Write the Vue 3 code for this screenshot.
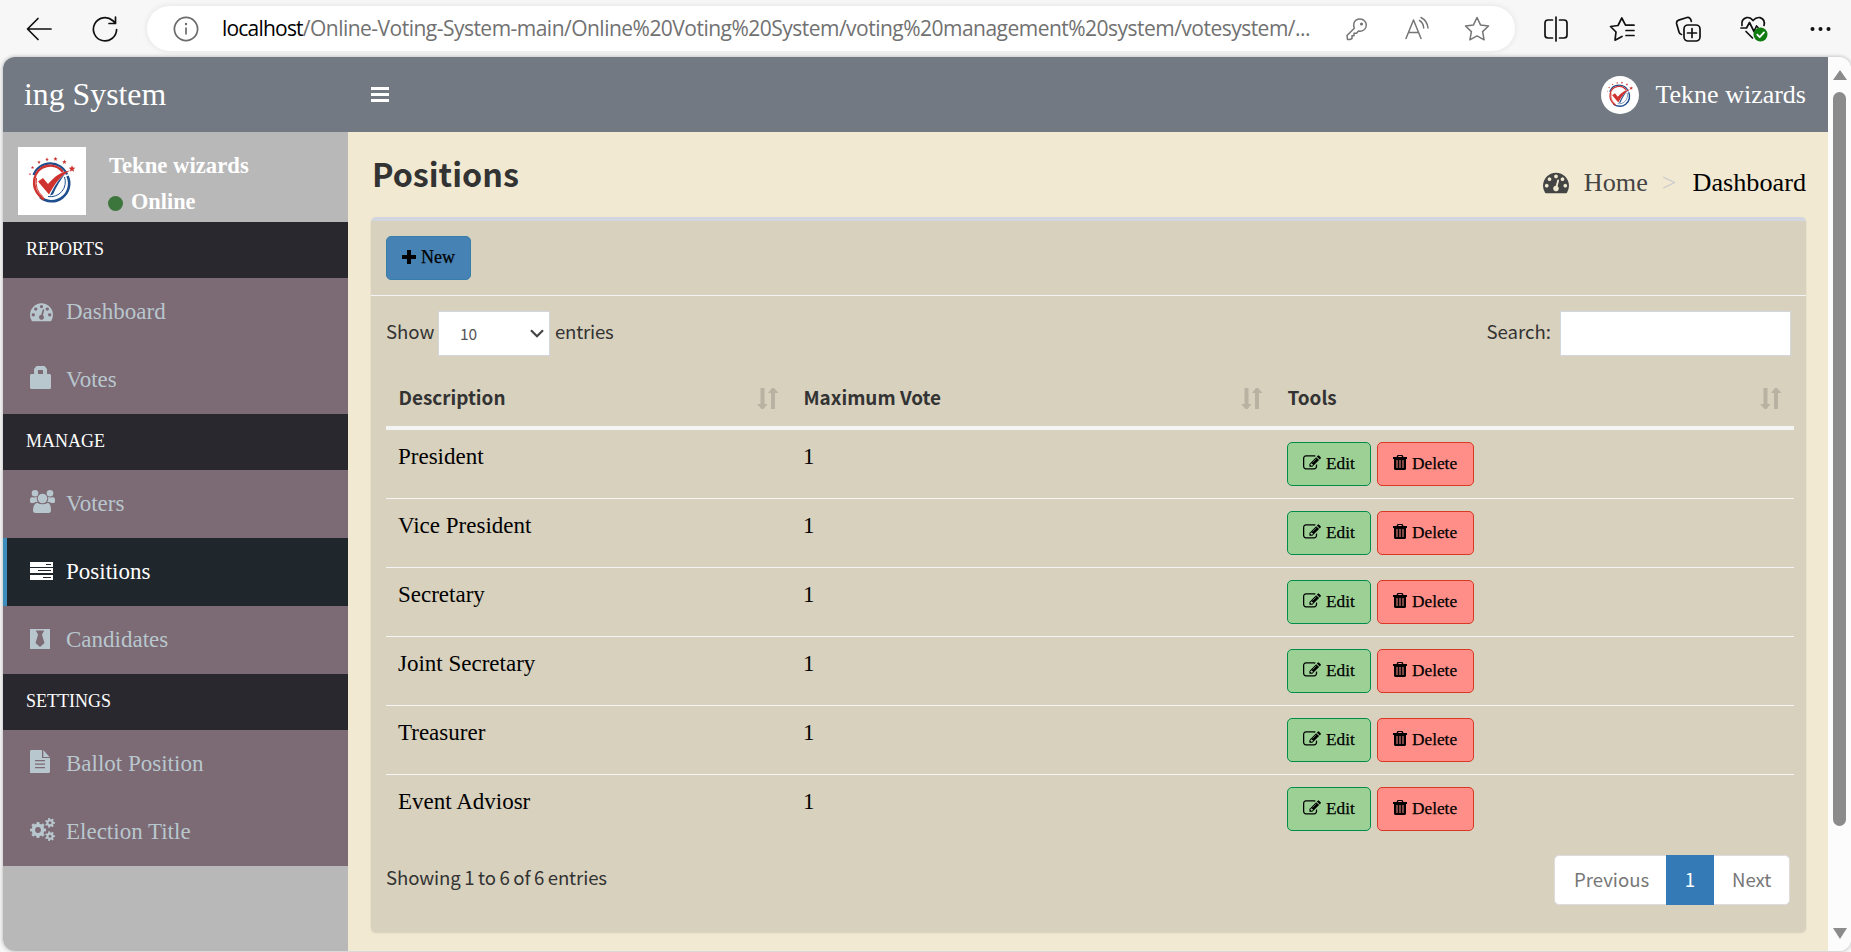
<script setup>
import { h } from 'vue'

const groups = [
  { title: 'REPORTS', items: [{ label: 'Dashboard', icon: 'gauge' }, { label: 'Votes', icon: 'lock' }] },
  {
    title: 'MANAGE',
    items: [
      { label: 'Voters', icon: 'users' },
      { label: 'Positions', icon: 'tasks', active: true },
      { label: 'Candidates', icon: 'tie' },
    ],
  },
  { title: 'SETTINGS', items: [{ label: 'Ballot Position', icon: 'file' }, { label: 'Election Title', icon: 'cogs' }] },
]
const columns = ['Description', 'Maximum Vote', 'Tools']
const rows = ['President', 'Vice President', 'Secretary', 'Joint Secretary', 'Treasurer', 'Event Adviosr']

const gaugePath =
  'M384 1152q0-53-37.5-90.5t-90.5-37.5-90.5 37.5-37.5 90.5 37.5 90.5 90.5 37.5 90.5-37.5 37.5-90.5zm192-448q0-53-37.5-90.5t-90.5-37.5-90.5 37.5-37.5 90.5 37.5 90.5 90.5 37.5 90.5-37.5 37.5-90.5zm428 481l101-382q6-26-7.5-48.5t-38.5-29.5-48 6.5-30 39.5l-101 382q-60 5-107 43.5t-63 98.5q-20 77 20 146t117 89 146-20 89-117q16-60-6-117t-72-91zm660-33q0-53-37.5-90.5t-90.5-37.5-90.5 37.5-37.5 90.5 37.5 90.5 90.5 37.5 90.5-37.5 37.5-90.5zm-640-640q0-53-37.5-90.5t-90.5-37.5-90.5 37.5-37.5 90.5 37.5 90.5 90.5 37.5 90.5-37.5 37.5-90.5zm448 192q0-53-37.5-90.5t-90.5-37.5-90.5 37.5-37.5 90.5 37.5 90.5 90.5 37.5 90.5-37.5 37.5-90.5zm320 448q0 261-141 483-19 29-54 29h-1402q-35 0-54-29-141-221-141-483 0-182 71-348t191-286 286-191 348-71 348 71 286 191 191 286 71 348z'

// Outline of a gear with square teeth and a round hole
function gear(cx, cy, rOut, rIn, hole, teeth) {
  const pts = []
  const step = (Math.PI * 2) / teeth
  for (let i = 0; i < teeth; i++) {
    const a = i * step
    for (const [r, o] of [[rIn, -0.32], [rOut, -0.2], [rOut, 0.2], [rIn, 0.32]]) {
      pts.push(`${(cx + r * Math.cos(a + o * step)).toFixed(2)} ${(cy + r * Math.sin(a + o * step)).toFixed(2)}`)
    }
  }
  return `M${pts.join('L')}Z M${cx - hole} ${cy}a${hole} ${hole} 0 1 0 ${hole * 2} 0a${hole} ${hole} 0 1 0 ${-hole * 2} 0Z`
}

function star(cx, cy, r) {
  const pts = []
  for (let i = 0; i < 10; i++) {
    const a = (Math.PI / 5) * i - Math.PI / 2
    const q = i % 2 ? r * 0.45 : r
    pts.push(`${(cx + q * Math.cos(a)).toFixed(2)},${(cy + q * Math.sin(a)).toFixed(2)}`)
  }
  return pts.join(' ')
}

const stars = [[12, 27.2, 1.2], [14.5, 20.5, 1.7], [21, 15.2, 1.8], [29, 12.5, 1.9], [37.5, 12, 2.2], [46.4, 15, 2.4], [54, 21.8, 3.6]]
const Logo = () =>
  h('svg', { viewBox: '0 0 68 68', fill: 'none' }, [
    h('rect', { width: 68, height: 68, fill: '#fff' }),
    h('path', { d: 'M15.500 28A18 18 0 0 1 49 27.500', stroke: '#1f4e8f', 'stroke-width': 2.2 }),
    h('path', { d: 'M49.500 29A17.700 17.700 0 0 1 22 50', stroke: '#1f4e8f', 'stroke-width': 2.6 }),
    h('path', { d: 'M46.500 30A14.800 14.800 0 0 1 30 49.500', stroke: '#1f4e8f', 'stroke-width': 1 }),
    h('path', { d: 'M45 25A16 16 0 0 0 16.500 31.500Q14 44 26 52.500', stroke: '#cf3330', 'stroke-width': 2.4 }),
    h('path', { d: 'M18.500 31Q16.500 43 25 49.500', stroke: '#cf3330', 'stroke-width': 1 }),
    h('path', { d: 'M20 34.500L25 31L30 37C37 29 43 25 52 23.500C43 29 37 36 31 47.500Z', fill: '#cf3330' }),
    h('path', { d: 'M32 48.500C36.500 38.500 41 32 47 27C42.500 33 38 40 35 47.500Z', fill: '#1f4e8f' }),
    ...stars.map(([x, y, r]) => h('polygon', { points: star(x, y, r), fill: '#cf3330' })),
  ])
</script>

<template>
  <div class="window">
    <div class="toolbar">
      <span class="slot"><svg width="26" height="26" viewBox="0 0 26 26" class="ln dark"><path d="M25 13H2M12 2.500L1.500 13L12 23.500" /></svg></span>
      <span class="slot"><svg width="26" height="26" viewBox="0 0 26 26" class="ln dark"><path d="M24.600 13.500a11.600 11.600 0 1 1-4-9L23.500 7M23.500 1v6.500h-6.500" /></svg></span>
      <div class="urlbar">
        <svg class="info" width="26" height="26" viewBox="0 0 26 26"><circle cx="13" cy="13" r="11.600" fill="none" stroke="#6b6b6b" stroke-width="1.700" /><path d="M13 11.500v7" stroke="#6b6b6b" stroke-width="1.700" /><circle cx="13" cy="8" r="1.200" fill="#6b6b6b" /></svg>
        <div class="url"><span class="host">localhost</span><span class="rest">/Online-Voting-System-main/Online%20Voting%20System/voting%20management%20system/votesystem/...</span></div>
        <div class="urlicons">
          <span><svg width="26" height="26" viewBox="0 0 26 26" class="ln grey"><path d="M10.300 12.200Q8.500 7 12 4.200 15.500 1.800 19.500 4q4 3 2.300 7.500-2.300 4.500-7.300 3.500L12.500 17.300H10v2.500H8v2.700L6 23.500H3.500L3 19.500Z" /><circle cx="17.500" cy="8" r=".8" /></svg></span>
          <span><svg width="26" height="26" viewBox="0 0 26 26" class="ln grey"><path d="M2 22.500L9.500 4L17 22.500M4.700 16.500H14.300M15.500 4.500q4 2.500 4.200 7.500M17 1.500q6.500 3.500 7 10.500" /></svg></span>
          <span><svg width="26" height="26" viewBox="0 0 26 26" class="ln grey"><path d="M13 1.500l3.500 7.400 8 1.100-5.900 5.600 1.500 8.200L13 19.900l-7.100 3.900 1.500-8.200L1.500 10l8-1.100Z" /></svg></span>
        </div>
      </div>
      <span class="slot first"><svg width="26" height="26" viewBox="0 0 26 26" class="ln dark"><path d="M9.500 4H5Q2 4 2 7v12q0 3 3 3h4.500M16.500 4H21q3 0 3 3v12q0 3-3 3h-4.500M13 1v24" /></svg></span>
      <span class="slot"><svg width="26" height="26" viewBox="0 0 26 26" class="ln dark"><path d="M13 20.500L6 24.200l1-8.200L1.500 10.500l7.500-1L12.800 2l3.700 7.200H25M17 14.500H25M17 19.500H25" /></svg></span>
      <span class="slot"><svg width="26" height="26" viewBox="0 0 26 26" class="ln dark"><rect x="9" y="9" width="16" height="16" rx="4" /><path d="M17 12.500v9M12.500 17h9M6.500 18.500Q4.500 18 4 16L1.700 8q-.7-3 2-3.900L12 1.500q3.300-.6 4.300 3.800" /></svg></span>
      <span class="slot"><svg width="28" height="28" viewBox="0 0 28 28" class="ln dark"><path d="M2 10.500Q1 4 6.500 2.600 10.500 2 13 5.500 16 2 20 2.600 25.500 4.500 24 10.500M1 13h5.500l3-5.500 4.500 9L16.500 11l1.500 1.500M6 16.500l6.500 6.500" /><circle cx="20.500" cy="19.500" r="7" fill="#107c10" stroke="none" /><path d="M17.300 19.700l2.400 2.400 4.300-4.700" stroke="#fff" stroke-width="1.800" /></svg></span>
      <span class="slot"><svg width="26" height="26" viewBox="0 0 26 26" fill="#111"><circle cx="5.500" cy="13" r="2" /><circle cx="13.500" cy="13" r="2" /><circle cx="21.500" cy="13" r="2" /></svg></span>
    </div>

    <div class="viewport">
      <div class="page">
        <header class="topbar">
          <div class="brand">ing System</div>
          <div class="burger"><i></i><i></i><i></i></div>
          <div class="account"><Logo class="round" /><span>Tekne wizards</span></div>
        </header>
        <div class="main">
          <aside class="sidebar">
            <div class="user">
              <Logo class="avatar" />
              <div class="who">
                <p>Tekne wizards</p>
                <p class="online"><i></i><span>Online</span></p>
              </div>
            </div>
            <nav v-for="g in groups" :key="g.title">
              <div class="group">{{ g.title }}</div>
              <div v-for="it in g.items" :key="it.label" class="item" :class="{ active: it.active }">
                <span class="ico">
                  <svg v-if="it.icon === 'gauge'" class="gauge" width="23" height="23" viewBox="0 0 1792 1792"><path :d="gaugePath" /></svg>
                  <svg v-else-if="it.icon === 'lock'" class="up" width="21" height="23" viewBox="0 0 21 23"><path fill-rule="evenodd" d="M1 8H4V3L6.500 0H14.500L17 3V8H20L21 9V22L20 23H1L0 22V9ZM8 4V8H13V4Z" /></svg>
                  <svg v-else-if="it.icon === 'users'" class="up" width="25" height="23" viewBox="0 0 25 23"><circle cx="5" cy="3.300" r="3.300" /><circle cx="20" cy="3.300" r="3.300" /><circle cx="12.500" cy="8.500" r="4.800" /><path d="M2 7q2.500 1.300 5-.2-.8 3 .8 5.200H5.500L4 13H1L0 12V9.500Q0 7.500 2 7ZM23 7q-2.500 1.300-5-.2.8 3-.8 5.200h2.300L21 13h3l1-1V9.500Q25 7.500 23 7ZM7 12.700q5.500 3 11 0 3 1.300 3 7.300 0 3-2.500 3H6Q3 23 3 20.500 3 14 7 12.700Z" /></svg>
                  <svg v-else-if="it.icon === 'tasks'" class="mid" width="23" height="18" viewBox="0 0 23 18"><path fill-rule="evenodd" d="M0 0H23V5H0ZM16 2V3H21V2ZM0 6H23V11H0ZM8 8V9H21V8ZM0 13H23V18H0ZM13 15V16H21V15Z" /></svg>
                  <svg v-else-if="it.icon === 'tie'" class="mid" width="20" height="20" viewBox="0 0 20 20"><path fill-rule="evenodd" d="M0 0H20V20H0ZM6 2L8 5.500L7.500 7.500L5.500 14L10 18L14.500 14L12.500 7.500L12 5.500L14 2V1.500H6Z" /></svg>
                  <svg v-else-if="it.icon === 'file'" class="up" width="20" height="23" viewBox="0 0 20 23"><path fill-rule="evenodd" d="M0 1L1 0H12V8H20V22L19 23H0ZM5 10V11.200H15V10ZM5 13.500V14.700H15V13.500ZM5 17V18.200H15V17Z" /><path d="M13.300 0L19.500 7H13.300Z" /></svg>
                  <svg v-else class="up" width="25" height="23" viewBox="0 0 25 23" fill-rule="evenodd"><path :d="gear(8, 12, 8.2, 6.4, 2.9, 8)" /><path :d="gear(20, 4.8, 5, 3.6, 1.5, 7)" /><path :d="gear(20, 18.2, 5, 3.6, 1.5, 7)" /></svg>
                </span>
                <span class="label">{{ it.label }}</span>
              </div>
            </nav>
          </aside>

          <section class="content">
            <div class="heading">
              <h1>Positions</h1>
              <div class="crumbs">
                <svg width="26" height="26" viewBox="0 0 1792 1792"><path :d="gaugePath" /></svg>
                <span class="home">Home</span><span class="sep">&gt;</span><span class="here">Dashboard</span>
              </div>
            </div>

            <div class="box">
              <div class="boxhead">
                <button class="btn new"><svg width="14" height="14" viewBox="0 0 14 14"><path d="M5 0H9V5H14V9H9V14H5V9H0V5H5Z" /></svg><span>New</span></button>
              </div>
              <div class="filters">
                <span class="show">Show</span>
                <div class="select"><span>10</span><svg width="14" height="9" viewBox="0 0 14 9"><path d="M1 1.200L7 7.200L13 1.200" fill="none" stroke="#444" stroke-width="2.200" /></svg></div>
                <span class="entries">entries</span>
                <span class="search">Search:</span>
                <input class="field" />
              </div>
              <div class="table">
                <div class="tr th">
                  <div v-for="c in columns" :key="c" class="cell">
                    <span>{{ c }}</span>
                    <svg width="22" height="21" viewBox="0 0 22 21"><path d="M3.500 0H7.500V16H10.500L6.500 21H4.500L0 16H3.500ZM14 21H18V5H21.500L17 0H15L11 5H14Z" /></svg>
                  </div>
                </div>
                <div v-for="r in rows" :key="r" class="tr row">
                  <div class="cell">{{ r }}</div>
                  <div class="cell">1</div>
                  <div class="cell tools">
                    <button class="btn edit"><svg width="18" height="18" viewBox="0 0 1792 1792"><path d="M888 1184l116-116-152-152-116 116v56h96v96h56zm440-720q-16-16-33 1l-350 350q-17 17-1 33t33-1l350-350q17-17 1-33zm80 594v190q0 119-84.500 203.500t-203.500 84.500h-832q-119 0-203.500-84.500t-84.500-203.500v-832q0-119 84.500-203.500t203.500-84.500h832q63 0 117 25 15 7 18 23 3 17-9 29l-49 49q-14 14-32 8-23-6-45-6h-832q-66 0-113 47t-47 113v832q0 66 47 113t113 47h832q66 0 113-47t47-113v-126q0-13 9-22l64-64q15-15 35-7t20 29zm-96-738l288 288-672 672h-288v-288zm444 132l-92 92-288-288 92-92q28-28 68-28t68 28l152 152q28 28 28 68t-28 68z" /></svg><span>Edit</span></button>
                    <button class="btn delete"><svg width="14" height="15" viewBox="0 0 14 15"><path fill-rule="evenodd" d="M0 2H3.500L4.500 0H9.500L10.500 2H14V4H13V14L12 15H2L1 14V4H0ZM5 2H9L8.500 1H5.500ZM3.500 5V13H4.500V5ZM6.500 5V13H7.500V5ZM9.500 5V13H10.500V5Z" /></svg><span>Delete</span></button>
                  </div>
                </div>
              </div>
              <div class="foot">
                <span class="summary">Showing 1 to 6 of 6 entries</span>
                <div class="pager"><span class="prev">Previous</span><span class="cur">1</span><span class="next">Next</span></div>
              </div>
            </div>
          </section>
        </div>
      </div>
      <div class="scrollbar"><i class="arrow top"></i><i class="thumb"></i><i class="arrow bottom"></i></div>
    </div>
  </div>
</template>

<style>
body { overflow: hidden; background: #f7f7f7; }
</style>

<style scoped>
* { box-sizing: border-box; }
p, h1 { margin: 0; }
svg { display: block; flex: none; }
.window { width: 1851px; height: 952px; background: #f7f7f7; font-family: "Liberation Serif", serif; white-space: nowrap; overflow: hidden; }
.ln { fill: none; stroke-width: 1.7; stroke-linejoin: round; stroke-linecap: round; }
.dark { stroke: #111; }
.grey { stroke: #757575; stroke-width: 1.5; }

.toolbar { height: 57px; padding-left: 6px; display: flex; align-items: center; }
.slot { width: 66px; flex: none; display: flex; justify-content: center; }
.slot.first { margin-left: 8px; }
.urlbar { width: 1368px; flex: none; height: 45px; margin-left: 9px; background: #fff; border-radius: 23px; box-shadow: 0 0 6px rgba(0, 0, 0, .09); display: flex; align-items: center; }
.info { margin-left: 26px; }
.url { width: 1105px; margin-left: 23px; padding-bottom: 1px; font: 21px/30px "Open Sans", sans-serif; color: #717171; display: flex; }
.host { color: #000; letter-spacing: -0.8px; }
.rest { letter-spacing: -0.52px; }
.urlicons { display: flex; }
.urlicons span { width: 60px; display: flex; justify-content: center; }

.viewport { height: 894px; margin-left: 3px; display: flex; border-radius: 12px; overflow: hidden; box-shadow: 0 0 4px rgba(0, 0, 0, .3); }
.page { width: 1825px; display: flex; flex-direction: column; }
.topbar { height: 75px; background: #727982; display: flex; align-items: center; color: #fff; }
.brand { width: 345px; padding: 0 0 0 21px; font-size: 31.800px; line-height: 36px; }
.burger { width: 18px; margin-left: 23px; display: flex; flex-direction: column; gap: 3px; }
.burger i { height: 3px; background: #fff; }
.account { margin-left: auto; padding-right: 22px; display: flex; align-items: center; gap: 16px; font-size: 26px; }
.account span { line-height: 30px; padding-top: 1px; }
.round { width: 38px; height: 38px; border-radius: 50%; }

.main { flex: 1; display: flex; background: #f1e9d2; }
.sidebar { width: 345px; background: #b8b8b8; }
.user { height: 90px; padding: 15px 0 0 15px; display: flex; gap: 23px; color: #fff; font-weight: bold; font-size: 22.700px; }
.avatar { width: 68px; height: 68px; }
.who { padding-top: 1px; }
.who p { height: 36px; line-height: 36px; }
.online { display: flex; align-items: center; margin-left: -1px; font-size: 22.300px; }
.online i { width: 15px; height: 15px; border-radius: 50%; background: #3c763d; margin: 2px 8px 0 0; }
.group { height: 56px; padding-left: 23px; line-height: 54px; background: #29282f; color: #fff; font-size: 18px; }
.item { height: 68px; padding-left: 27px; display: flex; align-items: center; background: #7c6a74; color: #b8c7ce; font-size: 23px; }
.item.active { background: #20272c; color: #fff; padding-left: 23px; border-left: 4px solid #3c8dbc; }
.ico { width: 36px; fill: currentColor; }
.ico .up { margin-bottom: 5px; }
.ico .mid { margin-bottom: 3px; }
.ico .gauge { margin-bottom: 2px; }
.label { line-height: 30px; padding-bottom: 1px; }

.content { flex: 1; padding: 0 22px 0 23px; }
.heading { height: 85px; display: flex; justify-content: space-between; }
h1 { font: bold 32.300px/48px "Noto Sans CJK JP", sans-serif; color: #333; padding: 17px 0 0 1px; }
.crumbs { display: flex; align-items: center; height: 30px; margin-top: 36px; font-size: 26.200px; }
.crumbs svg { fill: #444; margin-bottom: 2px; }
.home { color: #444; margin-left: 15px; }
.sep { color: #ccc; margin: 0 16px 0 14px; }
.here { color: #000; }

.box { height: 715px; background: #d8d1be; border-top: 4px solid #d2d6de; border-radius: 5px; box-shadow: 0 1px 2px rgba(0, 0, 0, .12); font-family: "Noto Sans CJK JP", sans-serif; font-size: 18.600px; color: #333; }
.boxhead { height: 75px; padding: 15px; border-bottom: 1px solid #f4f4f4; }
.btn { height: 44px; padding: 0; display: flex; align-items: center; font-family: "Liberation Serif", serif; font-size: 17.300px; color: #000; border: 1px solid; border-radius: 5px; -webkit-text-stroke: .25px #000; }
.btn svg { margin-bottom: 3px; }
.btn span { padding-bottom: 1px; }
.new { width: 85px; padding-left: 15px; gap: 5px; background: #4682b4; border-color: #367fa9; font-size: 18px; }
.filters { height: 60px; padding: 15px 15px 0 15px; display: flex; line-height: 40px; }
.show { width: 52px; }
.select { width: 112px; height: 45px; background: #fff; border: 1px solid #d2d6de; padding: 0 5px 0 21px; display: flex; align-items: center; justify-content: space-between; font-size: 15.500px; color: #555; }
.select span { padding-bottom: 2px; }
.entries { margin-left: 5px; letter-spacing: -.2px; }
.search { margin-left: auto; }
.field { width: 231px; height: 45px; margin-left: 9px; border: 1px solid #d2d6de; background: #fff; }
.table { width: 1408px; margin-left: 15px; }
.tr { display: grid; grid-template-columns: 405px 484px 519px; }
.th { height: 74px; border-bottom: 4px solid #f4f4f4; font-weight: bold; font-size: 18.900px; }
.th .cell { display: flex; justify-content: space-between; align-items: flex-start; padding: 21px 12px 0 12.500px; line-height: 40px; }
.th svg { margin-top: 11px; fill: #b9b2a2; }
.row { height: 69px; font-family: "Liberation Serif", serif; font-size: 23px; line-height: 30px; color: #000; border-top: 1px solid #f4f4f4; }
.th + .row { height: 68px; border-top: 0; }
.row .cell { padding: 12px 12px 0; }
.tools { display: flex; gap: 6px; }
.edit { width: 84px; padding-left: 15px; gap: 5px; background: #9cd095; border-color: #008d4c; }
.delete { width: 97px; padding-left: 15px; gap: 5px; background: #ff8e88; border-color: #d73925; }
.foot { display: flex; justify-content: space-between; padding: 12px 16px 0 15px; }
.summary { padding-top: 2px; line-height: 40px; letter-spacing: -.1px; word-spacing: -.5px; }
.pager { height: 50px; display: flex; line-height: 46px; color: #777; background: #fff; border: 1px solid #ddd; border-radius: 5px; }
.prev { width: 111px; padding-left: 19px; }
.cur { width: 48px; margin: -1px 0; line-height: 48px; background: #337ab7; color: #fff; text-align: center; }
.next { width: 75px; padding-left: 18px; }

.scrollbar { width: 23px; background: #fcfcfc; display: flex; flex-direction: column; align-items: center; }
.arrow { border: 7.500px solid transparent; }
.top { border-top: 0; border-bottom: 10px solid #8b8b8b; margin-top: 13px; }
.bottom { border-bottom: 0; border-top: 11px solid #8b8b8b; margin-top: 102px; }
.thumb { width: 13px; height: 734px; margin-top: 12px; border-radius: 7px; background: #8b8b8b; }
</style>
